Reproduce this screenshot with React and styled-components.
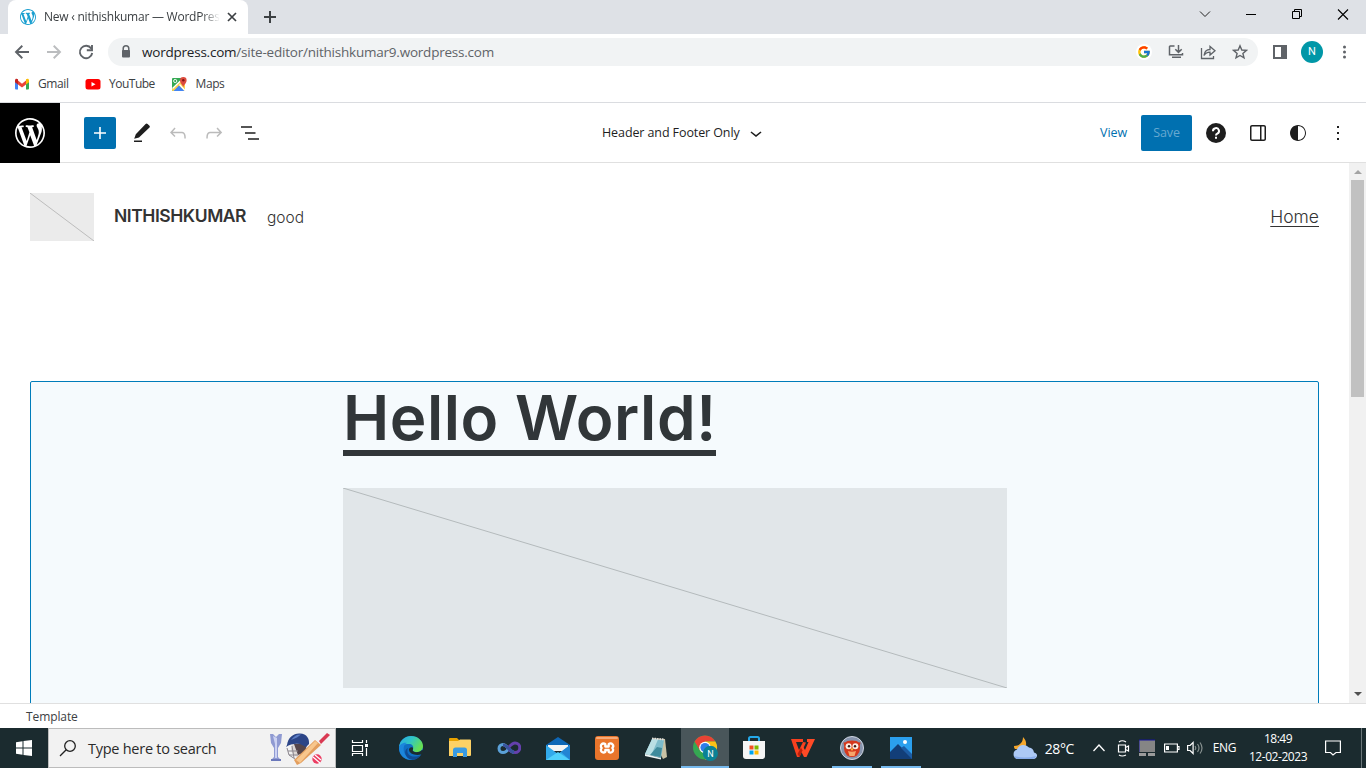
import React from 'react';
import styled, { createGlobalStyle } from 'styled-components';
import { FcGoogle } from 'react-icons/fc';

const Global = createGlobalStyle`
  * { box-sizing: border-box; }
  body { margin: 0; overflow: hidden; background: #fff; }
  svg { display: block; flex: none; }
`;

const ui = `"Open Sans", "Noto Sans", sans-serif`;

const Screen = styled.div`
  width: 1366px;
  height: 768px;
  display: flex;
  flex-direction: column;
  overflow: hidden;
  font-family: ${ui};
`;

const Label = styled.span`
  font-family: ${(p) => p.$font || ui};
  font-size: ${(p) => p.$size || 12}px;
  font-weight: ${(p) => p.$weight || 400};
  letter-spacing: ${(p) => p.$track || 0}px;
  color: ${(p) => p.$color || '#3c4043'};
  line-height: ${(p) => p.$line || 18}px;
  white-space: nowrap;
`;

/* Browser chrome */
const TabStrip = styled.div`
  height: 34px;
  flex: none;
  background: #dee1e6;
  display: flex;
  padding-left: 8px;
`;
const Tab = styled.div`
  width: 240px;
  height: 34px;
  background: #fff;
  border-radius: 8px 8px 0 0;
  display: flex;
  align-items: center;
  padding-left: 12px;
`;
const TabTitle = styled.div`
  width: 179px;
  margin-left: 8px;
  display: flex;
  mask-image: linear-gradient(90deg, #000 158px, transparent 176px);
`;
const TabClose = styled.div`
  margin-left: 4px;
`;
const NewTab = styled.div`
  margin: 10px 0 0 15px;
`;
const WindowButtons = styled.div`
  margin-left: auto;
  display: flex;
  gap: 30px;
  padding: 6px 16px 0 0;
`;
const AddressRow = styled.div`
  height: 36px;
  flex: none;
  display: flex;
  align-items: center;
  padding-left: 14px;
`;
const NavIcons = styled.div`
  width: 94px;
  display: flex;
  gap: 16px;
`;
const Omnibox = styled.div`
  width: 1150px;
  height: 28px;
  border-radius: 14px;
  background: #f1f3f4;
  display: flex;
  align-items: center;
  padding: 0 10px 0 10px;
`;
const Url = styled.div`
  margin-left: 8px;
  flex: 1;
  display: flex;
`;
const OmniIcons = styled.div`
  display: flex;
  align-items: center;
  gap: 16px;
`;
const BrowserIcons = styled.div`
  display: flex;
  align-items: center;
  margin-left: 14px;
`;
const Avatar = styled.div`
  width: 22px;
  height: 22px;
  margin: 0 14px 0 13px;
  border-radius: 50%;
  background: #0097a7;
  display: flex;
  align-items: center;
  justify-content: center;
`;
const Bookmarks = styled.div`
  height: 33px;
  flex: none;
  display: flex;
  align-items: center;
  padding: 0 0 4px 14px;
  border-bottom: 1px solid #dadce0;
`;
const Bookmark = styled.div`
  display: flex;
  align-items: center;
  gap: 8px;
  width: ${(p) => p.$w}px;
`;

/* Site editor */
const EditorBar = styled.div`
  height: 60px;
  flex: none;
  display: flex;
  align-items: center;
  border-bottom: 1px solid #e0e0e0;
`;
const SiteLogo = styled.div`
  width: 60px;
  height: 60px;
  align-self: flex-start;
  background: #000;
  display: flex;
  align-items: center;
  justify-content: center;
`;
const Tools = styled.div`
  width: 542px;
  padding-left: 24px;
  display: flex;
  align-items: center;
`;
const AddButton = styled.div`
  width: 32px;
  height: 32px;
  border-radius: 2px;
  background: #0070b0;
  padding: 4px;
  margin-right: 14px;
`;
const ToolIcon = styled.div`
  width: 36px;
  display: flex;
  justify-content: flex-start;
`;
const TemplateName = styled.div`
  display: flex;
  align-items: center;
  gap: 4px;
  padding-top: 1px;
`;
const Actions = styled.div`
  margin-left: auto;
  display: flex;
  align-items: center;
  padding-right: 16px;
`;
const ViewLink = styled.div`
  display: flex;
  padding-top: 1px;
`;
const SaveButton = styled.div`
  width: 51px;
  height: 36px;
  margin: 0 12px 0 14px;
  border-radius: 2px;
  background: #0070b0;
  display: flex;
  align-items: center;
  justify-content: center;
  padding-top: 1px;
`;
const ActionIcons = styled.div`
  display: flex;
  gap: 16px;
`;
const HelpIcon = styled.div`
  width: 26px;
`;
const Workspace = styled.div`
  height: 540px;
  flex: none;
  display: flex;
`;
const Canvas = styled.div`
  flex: 1;
  height: 540px;
  overflow: hidden;
  padding: 30px 30px 0;
`;
const SiteHeader = styled.div`
  height: 48px;
  display: flex;
  align-items: center;
`;
const LogoPlaceholder = styled.div`
  width: 64px;
  height: 48px;
  background: #ebebeb;
  margin-right: 20px;
`;
const SiteTitle = styled.div`
  width: 133px;
  padding-bottom: 2px;
`;
const Tagline = styled.div`
  margin-left: 20px;
  padding-bottom: 1px;
`;
const NavLink = styled.div`
  margin-left: auto;
  height: 24px;
  span {
    text-decoration: underline;
    text-decoration-thickness: 1px;
    text-underline-offset: 3px;
  }
`;
const QueryBlock = styled.div`
  margin-top: 140px;
  height: 400px;
  border: 1px solid #007cba;
  border-radius: 2px 2px 0 0;
  background: #f5fafd;
  padding-left: 312px;
`;
const PostTitle = styled.div`
  width: 373px;
  height: 74px;
  border-bottom: 6px solid #313639;
  white-space: nowrap;
`;
const PostImage = styled.div`
  width: 664px;
  height: 200px;
  margin-top: 32px;
  background: #e1e6e9;
`;
const Scrollbar = styled.div`
  width: 17px;
  background: #f1f1f1;
  display: flex;
  flex-direction: column;
  align-items: center;
  justify-content: space-between;
`;
const Thumb = styled.div`
  width: 13px;
  height: 217px;
  background: #c1c1c1;
  margin-bottom: auto;
`;
const Breadcrumb = styled.div`
  height: 25px;
  flex: none;
  border-top: 1px solid #e0e0e0;
  padding: 4px 0 0 26px;
  display: flex;
`;

/* Desktop taskbar */
const Taskbar = styled.div`
  height: 40px;
  flex: none;
  display: flex;
  background: #1b2b2f;
`;
const Start = styled.div`
  width: 48px;
  padding: 12px 0 0 16px;
`;
const Search = styled.div`
  width: 288px;
  background: #f2f2f2;
  border: 1px solid #bcbcbc;
  display: flex;
  align-items: center;
  padding-left: 10px;
`;
const SearchText = styled.div`
  width: 182px;
  margin-left: 11px;
  padding-top: 1px;
  display: flex;
`;
const Apps = styled.div`
  display: flex;
  gap: 1px;
`;
const TaskButton = styled.div`
  width: 48px;
  height: 40px;
  display: flex;
  align-items: center;
  justify-content: center;
  margin-right: ${(p) => (p.$first ? 2 : 0)}px;
  background-color: ${(p) => (p.$active ? '#49565a' : 'transparent')};
  background-image: ${(p) => (p.$open || p.$active ? 'linear-gradient(#76b9ed, #76b9ed)' : 'none')};
  background-size: ${(p) => (p.$active ? 48 : 40)}px 2px;
  background-position: center bottom;
  background-repeat: no-repeat;
`;
const Tray = styled.div`
  margin-left: auto;
  display: flex;
  align-items: center;
`;
const Temperature = styled.div`
  display: flex;
  width: 30px;
  margin-left: 7px;
  padding-top: 1px;
`;
const TrayIcons = styled.div`
  display: flex;
  align-items: center;
  margin: 0 9px 0 17px;
`;
const Clock = styled.div`
  width: 62px;
  margin-left: 11px;
  display: flex;
  flex-direction: column;
  align-items: center;
`;
const ActionCenter = styled.div`
  margin: 0 20px 0 16px;
`;
const ShowDesktop = styled.div`
  width: 5px;
  height: 40px;
  border-left: 1px solid #6a7679;
`;

const Glyph = ({ d, size = 24, fill = '#1e1e1e' }) => (
  <svg width={size} height={size} viewBox="0 0 24 24" fill={fill}>
    <path d={d} fillRule="evenodd" />
  </svg>
);
const Line = ({ d, w = 16, h = 16, s = '#5f6368', sw = 2, children }) => (
  <svg width={w} height={h} viewBox={`0 0 ${w} ${h}`} fill="none" stroke={s} strokeWidth={sw}>
    {d && <path d={d} />}
    {children}
  </svg>
);

const WordPressMark = ({ size, color }) => (
  <svg width={size} height={size} viewBox="0 0 20 20" fill={color}>
    <path d="M20 10c0-5.510-4.490-10-10-10C4.480 0 0 4.490 0 10c0 5.520 4.480 10 10 10 5.510 0 10-4.480 10-10zM7.780 15.370L4.370 6.220c.55-.02 1.170-.08 1.170-.08.5-.06.44-1.130-.06-1.110 0 0-1.450.11-2.370.11-.18 0-.37 0-.58-.01C4.120 2.690 6.870 1.110 10 1.110c2.330 0 4.450.87 6.050 2.340-.68-.11-1.650.39-1.650 1.580 0 .74.45 1.360.9 2.100.35.61.55 1.360.55 2.460 0 1.490-1.400 5-1.400 5l-3.030-8.370c.54-.02.82-.17.82-.17.5-.05.44-1.250-.06-1.220 0 0-1.440.12-2.380.12-.87 0-2.330-.12-2.330-.12-.5-.03-.56 1.200-.06 1.220l.92.08 1.260 3.410zM17.410 10c.24-.64.74-1.870.43-4.250.7 1.290 1.050 2.710 1.050 4.250 0 3.290-1.730 6.240-4.400 7.780.97-2.590 1.940-5.200 2.920-7.780zM6.100 18.090C3.120 16.650 1.110 13.530 1.110 10c0-1.300.23-2.480.72-3.590C3.250 10.300 4.670 14.200 6.100 18.090zM10.130 11.460l2.580 6.980c-.86.29-1.760.45-2.710.45-.79 0-1.570-.11-2.290-.33.81-2.380 1.620-4.740 2.420-7.100z" />
  </svg>
);

const GmailIcon = () => (
  <svg width="16" height="16" viewBox="0 0 16 16">
    <path d="M1 4v8.500q0 1 1 1h2V6z" fill="#4285f4" />
    <path d="M15 4v8.500q0 1-1 1h-2V6z" fill="#34a853" />
    <path d="M4 4.600 8 7.800l4-3.200v3.900L8 11.600 4 8.500z" fill="#ea4335" />
    <path d="M1 4.300C1 2.500 2.800 2.200 4 3.300v5.200L1 6.200z" fill="#c5221f" />
    <path d="M15 4.300C15 2.500 13.200 2.200 12 3.300v5.200l3-2.300z" fill="#fbbc04" />
  </svg>
);
const YouTubeIcon = () => (
  <svg width="16" height="16" viewBox="0 0 16 16">
    <rect x="0.5" y="3" width="15" height="10.500" rx="2.500" fill="#f00" />
    <path d="M6.500 6v4.500l4-2.250z" fill="#fff" />
  </svg>
);
const MapsIcon = () => (
  <svg width="16" height="16" viewBox="0 0 16 16">
    <rect x="0" y="2" width="13" height="13" rx="1" fill="#34a853" />
    <path d="M0 13 11 2h2v13H1q-1 0-1-1z" fill="#fbd24a" />
    <path d="M1.500 15 7 9.500l5.500 5.500z" fill="#4285f4" />
    <path d="M.5 12.500 10 3.500M7.500 8.500l5.500 6" stroke="#fff" strokeWidth="1.300" />
    <circle cx="3.200" cy="5" r="1.600" fill="none" stroke="#fff" strokeWidth=".9" />
    <path d="M11.200 11.500C10.700 8.500 8 7.500 8 4.200a3.300 3.300 0 0 1 6.600 0c0 3.300-2.900 4.300-3.400 7.300z" fill="#dd4b3e" />
    <circle cx="11.300" cy="4.200" r="1.200" fill="#811411" />
  </svg>
);

const CricketArt = () => (
  <svg width="60" height="34" viewBox="0 0 60 34">
    <path d="M0 3h3l3 3 3-3h3l-1 9-3 5v9l3 3H1l3-3v-9L1 12z" fill="#8f9ad2" />
    <path d="M3 5l2 8v14h2V7z" fill="#ccd2f2" />
    <path d="M1 28h10v2H1z" fill="#6b78bb" />
    <ellipse cx="29" cy="18" rx="8" ry="8" fill="#dcd6d4" />
    <path d="M24 13h13l-2 8-7 3z" fill="#55454a" />
    <path d="M17 14C18 6 24 2 30 2.500c7 .5 9.500 5 9 10.500l-3 3-6-3q-8-1-14 3z" fill="#2c4587" />
    <path d="M21 9c3-4 6-6 10-5.500l-4 3q-3 1-6 2.500z" fill="#5c7dc4" />
    <path d="M17 17l2 7 6 4M18 20h10M19 24h9M22 15l2 12" fill="none" stroke="#8b868e" strokeWidth="1" />
    <path d="m24 29 21-20 6 5-20 18-4 2z" fill="#e39e5e" />
    <path d="m26 29 19-19 3 2-18 20z" fill="#f8c68c" />
    <path d="m49 10 8-8 3 2-9 9z" fill="#d93952" />
    <circle cx="47" cy="28" r="4.700" fill="#ec3d63" />
    <path d="m43 26 7 6M45 24l6 5" stroke="#fff" strokeWidth="1.200" />
  </svg>
);

const EdgeIcon = () => (
  <svg width="24" height="24" viewBox="0 0 24 24">
    <defs>
      <linearGradient id="edgeTop" x1="0" y1="0" x2="1" y2=".5">
        <stop offset="0" stopColor="#2aa8e6" />
        <stop offset=".5" stopColor="#30c5c6" />
        <stop offset="1" stopColor="#67e052" />
      </linearGradient>
    </defs>
    <circle cx="12" cy="12" r="12" fill="#0f6fc4" />
    <path d="M0 11C1 4 6 0 12 0c7 0 12 5 12 10 0 4-3 6-6 6-4 0-5-1.500-4-3 1-3-1-5-4-5C5 8 1 9 0 11z" fill="url(#edgeTop)" />
    <path d="M0 12c0-3 4-6 8-5-3 1-4 5-3 9 1 3 4 7 9 7.500C6 25 0 19 0 12z" fill="#1c86dc" />
    <path d="M9 12c-3 7 5 11 13 7-3 4-7 5-10 4.600C6 22 4 14 9 12z" fill="#104b94" />
    <path d="M13.800 11.500c1 1.500-1 2.500.5 3.800 2 1.500 6 1.200 8.700-1.300l2 .5-1 3.500-2 .6C15 20 9.500 17 10 13q1-2.500 3.800-1.500z" fill="#1b2b2f" />
  </svg>
);
const FolderIcon = () => (
  <svg width="22" height="20" viewBox="0 0 22 20">
    <path d="M0 1q0-1 1-1h7l2 2v4H0z" fill="#e8a200" />
    <path d="M0 3h9l2-1.500h10q1 0 1 1V17q0 1-1 1H0z" fill="#fdd165" />
    <path d="M4 19v-7q0-2.500 2.500-2.500h9Q18 9.500 18 12v7h-4v-4H8v4z" fill="#3a9be2" />
  </svg>
);
const InfinityIcon = () => (
  <svg width="24" height="14" viewBox="0 0 24 14" fill="none" strokeWidth="3">
    <path d="M12 7C10 11 8 11.500 6 11.500a4 4 0 0 1 0-8c4 0 6 7 11 8" stroke="#5ba1d8" />
    <path d="M10 8c3-3 5-6 8-6a4.800 4.800 0 0 1 0 9.600c-2 0-4-1-6-3" stroke="#6540ad" />
    <path d="M6 4c4 0 7 6 11 7.500" stroke="#39549e" />
  </svg>
);
const MailIcon = () => (
  <svg width="24" height="23" viewBox="0 0 24 23">
    <path d="M0 8 12 0l12 8v3H0z" fill="#0e67b6" />
    <path d="M2 8h20v6H2z" fill="#f4f4f4" />
    <path d="M0 8v15h24V8L12 17z" fill="#32a9ea" />
    <path d="m0 23 12-8 12 8z" fill="#50d0fb" />
    <path d="m24 8-9 7 9 8z" fill="#2384d3" />
  </svg>
);
const XamppIcon = () => (
  <svg width="24" height="24" viewBox="0 0 24 24">
    <rect width="24" height="24" rx="3" fill="#e9752b" />
    <rect x="1" y="1" width="22" height="2" rx="1" fill="#f6aa78" />
    <path d="M10.300 10.500V8.200a2.400 2.400 0 1 0-3.600 3.800 2.400 2.400 0 1 0 3.600 3.800V14h3.400v1.800a2.400 2.400 0 1 0 3.600-3.800 2.400 2.400 0 1 0-3.600-3.800v2.300z" fill="none" stroke="#fff" strokeWidth="2.300" strokeLinejoin="round" />
  </svg>
);
const NotepadIcon = () => (
  <svg width="24" height="24" viewBox="0 0 24 24">
    <path d="m8 2 13 1 2 18-4 2z" fill="#c9c3a6" />
    <path d="m8 3 12 1-3 18L1 18z" fill="#7dbccb" />
    <path d="m8 3 6 .5L7 19.500 1 18z" fill="#b9dfe4" />
    <path d="m13 11 5 1-1.500 9L6 19z" fill="#3f8b9c" />
    <path d="m1 18 16 4v1.500L1 20z" fill="#eef5f5" />
    <path d="M8 2.500 20 3.500" stroke="#ddd" strokeWidth="2" strokeDasharray="1.500 1" />
  </svg>
);
const ChromeIcon = () => (
  <svg width="26" height="26" viewBox="0 0 26 26">
    <circle cx="13" cy="12.500" r="12" fill="#35a852" />
    <path d="M2.600 6.500A12 12 0 0 1 23.400 6.500H13L8 15.500z" fill="#e94335" />
    <path d="M23.400 6.500A12 12 0 0 1 13 24.500l5-9-5-9z" fill="#fbc116" />
    <circle cx="13" cy="12.500" r="5.800" fill="#fff" />
    <circle cx="13" cy="12.500" r="4.600" fill="#2f7de9" />
    <circle cx="18.400" cy="18.400" r="7.600" fill="#0b8295" />
    <text x="18.400" y="21.700" textAnchor="middle" fontFamily="Roboto, sans-serif" fontSize="9" fill="#fff">N</text>
  </svg>
);
const StoreIcon = () => (
  <svg width="24" height="24" viewBox="0 0 24 24">
    <path d="M7 6V2.500Q7 1 8.500 1h7Q17 1 17 2.500V6" fill="none" stroke="#24a8e8" strokeWidth="2" />
    <path d="M1 5h22v15q0 3-3 3H4q-3 0-3-3z" fill="#f5f5f5" />
    <path d="M7.500 9.500h4v4h-4z" fill="#f25022" />
    <path d="M12.500 9.500h4v4h-4z" fill="#7fba00" />
    <path d="M7.500 14.500h4v4h-4z" fill="#00a4ef" />
    <path d="M12.500 14.500h4v4h-4z" fill="#ffb900" />
  </svg>
);
const OfficeIcon = () => (
  <svg width="24" height="18" viewBox="0 0 24 18">
    <path d="M0 0h12v3H5l3 8 4-8 3 .5L8.500 18H6z" fill="#f8401f" />
    <path d="m11 6 3 5 3.500-8H16V0h8l-8.500 18H13l-3.500-7z" fill="#ff4a26" />
    <path d="m8.500 18 3-6.500L10 8.500 6.500 15z" fill="#bd1e0b" />
  </svg>
);
const OwlIcon = () => (
  <svg width="24" height="24" viewBox="0 0 24 24">
    <circle cx="12" cy="12" r="11.500" fill="#8794ad" stroke="#cfd6e2" />
    <path d="M3.500 6.500q2 0 4-1.500 4.500-1 9 0 2 1.500 4 1.500-1 3-.5 6 0 4-3 7-5 3-10 0-3-3-3-7 .5-3-.5-6z" fill="#d5381d" />
    <path d="M8 15q4 1.500 8 0l-1.500 5h-5z" fill="#f6a56a" />
    <circle cx="8.600" cy="10.300" r="3" fill="#fbeee4" />
    <circle cx="15.400" cy="10.300" r="3" fill="#fbeee4" />
    <circle cx="9" cy="10.300" r="1.200" fill="#3a1a16" />
    <circle cx="15" cy="10.300" r="1.200" fill="#3a1a16" />
    <path d="m12 11.500-1.200 1.700L12 15l1.200-1.800z" fill="#fac03e" />
  </svg>
);
const PhotosIcon = () => (
  <svg width="22" height="22" viewBox="0 0 22 22">
    <path d="M0 0h22v22H0z" fill="#2ba0ef" />
    <path d="M0 22V15L8 7l14 14v1z" fill="#123e78" />
    <path d="m11 11 3-2 8 8v5z" fill="#1c5ca4" />
    <circle cx="15" cy="5" r="2" fill="#fff" />
  </svg>
);
const WeatherIcon = () => (
  <svg width="26" height="24" viewBox="0 0 26 24">
    <path d="M11 1c4 4 4 9 1 12H3c-1-1-1-2-1-3 5 0 9-3 9-9z" fill="#f6a72c" />
    <path d="M5 23a5 5 0 0 1 0-9.500 7 7 0 0 1 12-2 6 6 0 0 1 5 5c5 1 3 6.500 0 6.500z" fill="#adc9f5" />
    <path d="M2 20q10 3 22 0-1 3-3 3H5q-2 0-3-3z" fill="#88acea" />
  </svg>
);

export default function App() {
  return (
    <Screen>
      <Global />
      <TabStrip>
        <Tab>
          <WordPressMark size={16} color="#1a9fd0" />
          <TabTitle>
            <Label $track={-0.24}>New ‹ nithishkumar — WordPress</Label>
          </TabTitle>
          <TabClose>
            <Line w={10} h={10} s="#3c4043" sw={1.700} d="M1 1l8 8M9 1l-8 8" />
          </TabClose>
        </Tab>
        <NewTab>
          <Line w={14} h={14} s="#3c4043" sw={2} d="M7 1v12M1 7h12" />
        </NewTab>
        <WindowButtons>
          <Line s="#222" sw={1} d="M4 5.500l5 5 5-5" />
          <Line s="#000" sw={1} d="M4 8.500h10" />
          <Line s="#000" sw={1} d="M4.500 5.500h7v7h-7zM6.500 5.500v-2h7v7h-2" />
          <Line s="#000" sw={1.100} d="M4 3.500l10 10M14 3.500l-10 10" />
        </WindowButtons>
      </TabStrip>
      <AddressRow>
        <NavIcons>
          <Line d="M15 8H2.500M8.300 1.800 2 8l6.300 6.200" sw={1.900} />
          <Line s="#bbbdbf" d="M1 8h12.500M7.700 1.800 14 8l-6.300 6.200" sw={1.900} />
          <Line d="M13.200 4.500A6.200 6.200 0 1 0 14.200 9M14 1v5.200H8.800" sw={1.900} />
        </NavIcons>
        <Omnibox>
          <svg width="16" height="16" viewBox="0 0 16 16">
            <path d="M5.200 7V4.500a2.800 2.800 0 0 1 5.600 0V7" fill="none" stroke="#5f6368" strokeWidth="1.500" />
            <rect x="4" y="6" width="8" height="7.500" rx="1" fill="#5f6368" />
          </svg>
          <Url>
            <Label $size={13.5} $track={-0.22} $color="#202124">wordpress.com</Label>
            <Label $size={13.5} $track={-0.22} $color="#5f6368">/site-editor/nithishkumar9.wordpress.com</Label>
          </Url>
          <OmniIcons>
            <svg width="16" height="16" viewBox="0 0 16 16">
              <circle cx="8" cy="8" r="8" fill="#fff" />
              <g transform="translate(1 1)"><FcGoogle size={14} /></g>
            </svg>
            <Line sw={1.500} d="M6.500 2H2.200q-.7 0-.7.700v8.100h13V9M10.500 1v7M7.300 5.200l3.200 3.200 3.200-3.200M4 13.300h9" />
            <Line sw={1.300} d="M1.500 4v10.500h12V12M4 11.500C4.500 7.500 7 5.500 10 5.500V2.500l5 4.300-5 4.200V8.200C7.500 8.200 5.500 9 4 11.500z" />
            <Line sw={1.400} d="M8 1.800l1.800 4.200 4.600.4-3.500 3 1.100 4.500L8 11.500l-4 2.400 1.100-4.500-3.500-3L6.200 6z" />
          </OmniIcons>
        </Omnibox>
        <BrowserIcons>
          <svg width="16" height="16" viewBox="0 0 16 16">
            <path d="M1 1h14v14H1zM3 3v10h6V3z" fillRule="evenodd" fill="#5f6368" />
          </svg>
          <Avatar>
            <Label $size={11} $color="#fff" $font="Roboto, sans-serif">N</Label>
          </Avatar>
          <svg width="16" height="16" viewBox="0 0 16 16" fill="#5f6368">
            <circle cx="7.500" cy="3" r="1.500" />
            <circle cx="7.500" cy="8" r="1.500" />
            <circle cx="7.500" cy="13" r="1.500" />
          </svg>
        </BrowserIcons>
      </AddressRow>
      <Bookmarks>
        <Bookmark $w={71}>
          <GmailIcon />
          <Label $track={-0.4}>Gmail</Label>
        </Bookmark>
        <Bookmark $w={86.500}>
          <YouTubeIcon />
          <Label $track={-0.5}>YouTube</Label>
        </Bookmark>
        <Bookmark $w={80}>
          <MapsIcon />
          <Label $track={-0.4}>Maps</Label>
        </Bookmark>
      </Bookmarks>

      <EditorBar>
        <SiteLogo>
          <WordPressMark size={30} color="#fff" />
        </SiteLogo>
        <Tools>
          <AddButton>
            <Glyph fill="#fff" d="M18 11.200h-5.200V6h-1.600v5.200H6v1.600h5.200V18h1.600v-5.200H18z" />
          </AddButton>
          <ToolIcon>
            <Glyph d="M4.200 17.700 5.800 13.200 15.600 2.900Q16.600 2 17.600 2.900L19.500 4.800Q20.300 5.700 19.500 6.600L9 16.500zM4 19.400h8v1.600H4z" />
          </ToolIcon>
          <ToolIcon>
            <Glyph fill="#bbb" d="M18.300 11.700c-.6-.6-1.400-.9-2.300-.9H6.700l2.900-3.300-1.100-1-4.500 5L8.500 16l1-1-2.700-2.700H16c.5 0 .9.200 1.300.5 1 1 1 3.400 1 4.500v.3h1.500v-.2c0-1.500 0-4.300-1.500-5.700z" />
          </ToolIcon>
          <ToolIcon>
            <Glyph fill="#bbb" d="M15.600 6.500l-1.100 1 2.900 3.300H8c-.9 0-1.700.3-2.300.9-1.400 1.500-1.400 4.200-1.400 5.600v.2h1.500v-.3c0-1.100 0-3.500 1-4.500.3-.3.7-.5 1.300-.5h9.200L14.500 15l1.100 1.100 4.600-4.600-4.600-5z" />
          </ToolIcon>
          <ToolIcon>
            <Glyph d="M3 5.200h11v1.500H3zM7 11.200h10.500v1.500H7zM10 17.200h11v1.500H10z" />
          </ToolIcon>
        </Tools>
        <TemplateName>
          <Label $size={12.5} $track={-0.1} $color="#1e1e1e">Header and Footer Only</Label>
          <Glyph d="M17.500 11.600L12 16l-5.500-4.400.9-1.200L12 14l4.500-3.600 1 1.200z" />
        </TemplateName>
        <Actions>
          <ViewLink>
            <Label $size={12.5} $track={-0.1} $color="#0070b0">View</Label>
          </ViewLink>
          <SaveButton>
            <Label $size={12.5} $track={-0.1} $color="#66a9d0">Save</Label>
          </SaveButton>
          <ActionIcons>
            <HelpIcon>
              <svg width="24" height="24" viewBox="0 0 24 24">
                <circle cx="12" cy="12" r="10" fill="#1e1e1e" />
                <path d="M9 10.200a3 2.900 0 1 1 4.300 2.400q-1.300.6-1.300 1.800" fill="none" stroke="#fff" strokeWidth="2" />
                <path d="M11 15.700h2v2h-2z" fill="#fff" />
              </svg>
            </HelpIcon>
            <Glyph d="M18 4H6c-1.100 0-2 .9-2 2v12c0 1.100.9 2 2 2h12c1.100 0 2-.9 2-2V6c0-1.100-.9-2-2-2zm-4 14.500H6c-.3 0-.5-.2-.5-.5V6c0-.3.2-.5.5-.5h8v13zm4.500-.5c0 .3-.2.5-.5.5h-2.500v-13H18c.3 0 .5.2.5.5v12z" />
            <Glyph d="M12 4c-4.400 0-8 3.600-8 8s3.600 8 8 8 8-3.600 8-8-3.600-8-8-8zm0 15V5c3.900 0 7 3.100 7 7s-3.100 7-7 7z" />
            <Glyph d="M13 19h-2v-2h2v2zm0-6h-2v-2h2v2zm0-6h-2V5h2v2z" />
          </ActionIcons>
        </Actions>
      </EditorBar>

      <Workspace>
        <Canvas>
          <SiteHeader>
            <LogoPlaceholder>
              <Line w={64} h={48} s="#bcbcbc" sw={1} d="M0 0l64 48" />
            </LogoPlaceholder>
            <SiteTitle>
              <Label $size={17.5} $weight={600} $track={-0.45} $font="Inter, sans-serif" $color="#333">NITHISHKUMAR</Label>
            </SiteTitle>
            <Tagline>
              <Label $size={15.5} $weight={300} $font="Inter, sans-serif" $color="#333">good</Label>
            </Tagline>
            <NavLink>
              <Label $size={17.5} $line={24} $weight={300} $font="Inter, sans-serif" $color="#333">Home</Label>
            </NavLink>
          </SiteHeader>
          <QueryBlock>
            <PostTitle>
              <Label $size={62} $line={72} $weight={600} $track={0.55} $font="Inter, sans-serif" $color="#313639">Hello World!</Label>
            </PostTitle>
            <PostImage>
              <Line w={664} h={200} s="#b4babc" sw={1} d="M0 0l664 200" />
            </PostImage>
          </QueryBlock>
        </Canvas>
        <Scrollbar>
          <Line w={17} h={17}><path d="M5 11h8l-4-4z" fill="#a3a3a3" stroke="none" /></Line>
          <Thumb />
          <Line w={17} h={17}><path d="M5 6h8l-4 4z" fill="#505050" stroke="none" /></Line>
        </Scrollbar>
      </Workspace>
      <Breadcrumb>
        <Label $track={-0.1}>Template</Label>
      </Breadcrumb>

      <Taskbar>
        <Start>
          <svg width="16" height="16" viewBox="0 0 16 16" fill="#fff">
            <path d="M0 2.200 6.500 1.300v6.200H0zM7.500 1.100 16 0v7.500H7.500zM0 8.500h6.500v6.200L0 13.800zM7.500 8.500H16V16l-8.500-1.100z" />
          </svg>
        </Start>
        <Search>
          <Line w={18} h={18} s="#222" sw={1.300}><circle cx="11" cy="7" r="5.300" /><path d="M7.200 10.800 1 17" /></Line>
          <SearchText>
            <Label $size={14.5} $track={-0.26} $color="#2b2b2b">Type here to search</Label>
          </SearchText>
          <CricketArt />
        </Search>
        <Apps>
          <TaskButton $first>
            <Line w={18} h={16} s="#fff" sw={1.200} d="M1.500 0v2.500h10V0M1.500 5.500h10v6h-10zM1.500 16v-2.500h10V16M15.500 0v3M15.500 8v8"><path d="M14 4h3v3h-3z" fill="#fff" stroke="none" /></Line>
          </TaskButton>
          <TaskButton><EdgeIcon /></TaskButton>
          <TaskButton><FolderIcon /></TaskButton>
          <TaskButton><InfinityIcon /></TaskButton>
          <TaskButton><MailIcon /></TaskButton>
          <TaskButton><XamppIcon /></TaskButton>
          <TaskButton><NotepadIcon /></TaskButton>
          <TaskButton $active><ChromeIcon /></TaskButton>
          <TaskButton><StoreIcon /></TaskButton>
          <TaskButton><OfficeIcon /></TaskButton>
          <TaskButton $open><OwlIcon /></TaskButton>
          <TaskButton $open><PhotosIcon /></TaskButton>
        </Apps>
        <Tray>
          <WeatherIcon />
          <Temperature>
            <Label $size={14} $track={-0.4} $color="#fff">28°C</Label>
          </Temperature>
          <TrayIcons>
            <Line w={25} h={16} s="#fff" sw={1.300} d="M1.500 11l5.500-6 5.500 6" />
            <Line w={22} h={18} s="#fff" sw={1.200} d="M1.500 6h7v7h-7zM8.500 8.500l3-1.500v5l-3-1.500M2 3q3-2.500 7 0M2 16q3 2 7 0" />
            <svg width="25" height="18" viewBox="0 0 25 18">
              <path d="M0 1h16v12H0z" fill="#858585" />
              <path d="M0 13V1h16" fill="none" stroke="#15159a" />
              <path d="M0 14h7v3H0zM9 14h7v3H9z" fill="#9b9b9b" />
            </svg>
            <Line w={23} h={16} s="#fff" sw={1.200} d="M.6 4h12.800v8H.6zM13.500 6.500h1.500v3h-1.500"><path d="M2 6h3v4H2z" fill="#fff" stroke="none" /></Line>
            <Line w={17} h={16} s="#fff" sw={1.200} d="M.6 5.500h2.500l3-3v11l-3-3H.6z"><path d="M8 6q1.500 2 0 4M10.500 4q3 4 0 8M13 2.500q4 5.500 0 11" stroke="#87908f" /></Line>
          </TrayIcons>
          <Label $size={12} $track={-0.4} $color="#fff">ENG</Label>
          <Clock>
            <Label $size={12} $track={-0.5} $color="#fff">18:49</Label>
            <Label $size={12} $track={-0.45} $color="#fff">12-02-2023</Label>
          </Clock>
          <ActionCenter>
            <Line w={16} h={16} s="#fff" sw={1.200} d="M.6 1h14.800v11.500H11L8 15l-2.500-2.500H.6z" />
          </ActionCenter>
          <ShowDesktop />
        </Tray>
      </Taskbar>
    </Screen>
  );
}
